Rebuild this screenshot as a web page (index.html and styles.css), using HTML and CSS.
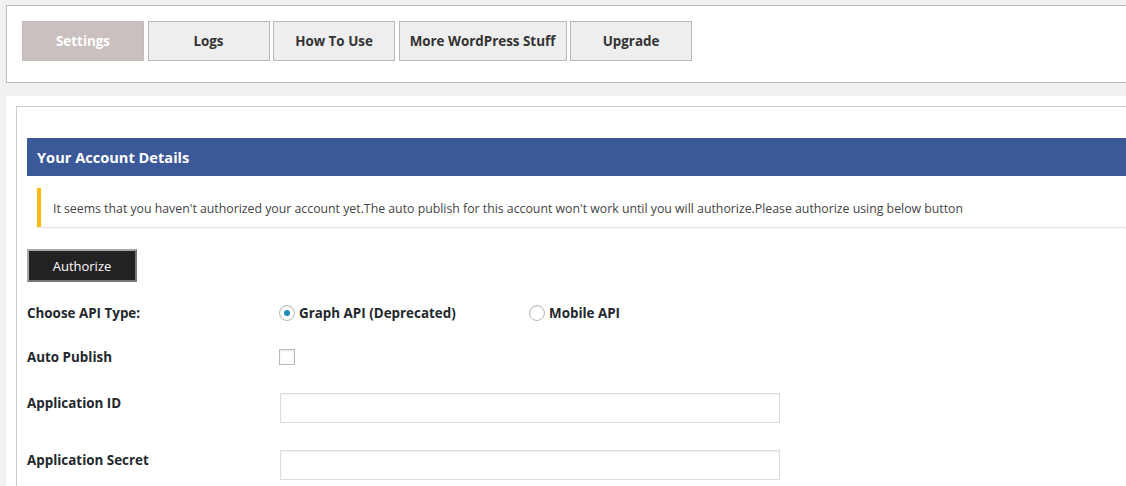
FILE: index.html
```html
<!DOCTYPE html>
<html lang="en">
<head>
<meta charset="utf-8">
<title>Settings</title>
<link rel="stylesheet" href="styles.css">
</head>
<body>
<div class="topbar">
  <nav class="tabs">
    <a class="tab active" href="#">Settings</a>
    <a class="tab" href="#">Logs</a>
    <a class="tab" href="#">How To Use</a>
    <a class="tab wide" href="#">More WordPress Stuff</a>
    <a class="tab" href="#">Upgrade</a>
  </nav>
</div>
<div class="wrap">
  <div class="panel">
    <h2 class="section-title">Your Account Details</h2>
    <div class="notice">It seems that you haven't authorized your account yet.The auto publish for this account won't work until you will authorize.Please authorize using below button</div>
    <button class="btn-auth" type="button">Authorize</button>
    <div class="form">
      <div class="row row-center row-api">
        <div class="label">Choose API Type:</div>
        <div class="field">
          <label class="opt opt-first"><span class="radio checked"></span>Graph API (Deprecated)</label>
          <label class="opt"><span class="radio"></span>Mobile API</label>
        </div>
      </div>
      <div class="row row-center row-auto">
        <div class="label">Auto Publish</div>
        <div class="field"><span class="checkbox"></span></div>
      </div>
      <div class="row row-id">
        <div class="label">Application ID</div>
        <div class="field"><span class="input"></span></div>
      </div>
      <div class="row row-secret">
        <div class="label">Application Secret</div>
        <div class="field"><span class="input"></span></div>
      </div>
    </div>
  </div>
</div>
</body>
</html>
```
FILE: styles.css
```css
html, body {
  margin: 0;
  padding: 0;
  background: #f1f1f1;
  overflow: hidden;
}
body {
  font-family: "Open Sans", "Noto Sans", sans-serif;
  color: #444;
  width: 1126px;
  height: 486px;
}
.topbar {
  margin: 5px -40px 0 6px;
  background: #fff;
  border: 1px solid #bcbcbc;
  padding: 15px 15px 21px 15px;
}
.tabs {
  display: flex;
  gap: 3.5px;
}
.tab {
  box-sizing: border-box;
  width: 122px;
  height: 40px;
  display: flex;
  align-items: center;
  justify-content: center;
  background: #eeeeee;
  border: 1px solid #b9b9b9;
  color: #333;
  font-weight: 700;
  font-size: 13.4px;
  text-decoration: none;
}
.tab.wide { width: 168px; }
.tab.active {
  background: #c9c0bf;
  color: #fff;
  border-color: #c3baba;
}
.wrap {
  margin: 13px -40px 0 6px;
  background: #fff;
  padding: 10px 0 0 10px;
}
.panel {
  border: 1px solid #cccccc;
  border-right: 0;
  padding: 31px 0 20px 10px;
}
.section-title {
  margin: 0;
  height: 38px;
  line-height: 38px;
  background: #3b5998;
  color: #fff;
  font-size: 14.6px;
  font-weight: 700;
  padding-left: 10px;
}
.notice {
  margin: 12px 0 0 10px;
  border-left: 4px solid #ffb900;
  box-shadow: 0 1px 1px rgba(0,0,0,0.1);
  background: #fff;
  height: 38px;
  padding-top: 1px;
  line-height: 39px;
  padding-left: 12px;
  font-size: 12.3px;
  color: #444;
  white-space: nowrap;
  overflow: hidden;
}
.btn-auth {
  display: block;
  margin: 22px 0 0 0;
  box-sizing: border-box;
  width: 110px;
  height: 33px;
  padding: 1px 0 0 0;
  background: #222;
  color: #fff;
  border: 2px solid;
  border-color: #a8a8a8 #777 #777 #a8a8a8;
  font-family: inherit;
  font-size: 13px;
}
.form { margin-top: 16px; }
.row {
  display: flex;
  align-items: flex-start;
}
.row-center { align-items: center; height: 30px; }
.row-auto { margin-top: 14px; }
.row-id { margin-top: 21px; }
.row-secret { margin-top: 27px; }
.label {
  width: 252px;
  flex: none;
  font-size: 13.4px;
  font-weight: 700;
  color: #23282d;
  line-height: 20px;
}
.field {
  display: flex;
  align-items: center;
  font-size: 13.4px;
  font-weight: 700;
  color: #23282d;
}
.opt {
  display: flex;
  align-items: center;
  gap: 4px;
}
.opt-first { width: 250px; }
.radio {
  box-sizing: border-box;
  width: 16px;
  height: 16px;
  border-radius: 50%;
  border: 1px solid #b4b9be;
  box-shadow: inset 0 1px 2px rgba(0,0,0,0.1);
  display: flex;
  align-items: center;
  justify-content: center;
}
.radio.checked::after {
  content: "";
  width: 6px;
  height: 6px;
  border-radius: 50%;
  background: #1e8cbe;
}
.checkbox {
  box-sizing: border-box;
  width: 16px;
  height: 16px;
  border: 1px solid #b4b9be;
  box-shadow: inset 0 1px 2px rgba(0,0,0,0.1);
}
.input {
  display: block;
  box-sizing: border-box;
  width: 500px;
  height: 30px;
  margin-left: 1px;
  border: 1px solid #dddddd;
  box-shadow: inset 0 1px 2px rgba(0,0,0,0.07);
  background: #fff;
}
```
